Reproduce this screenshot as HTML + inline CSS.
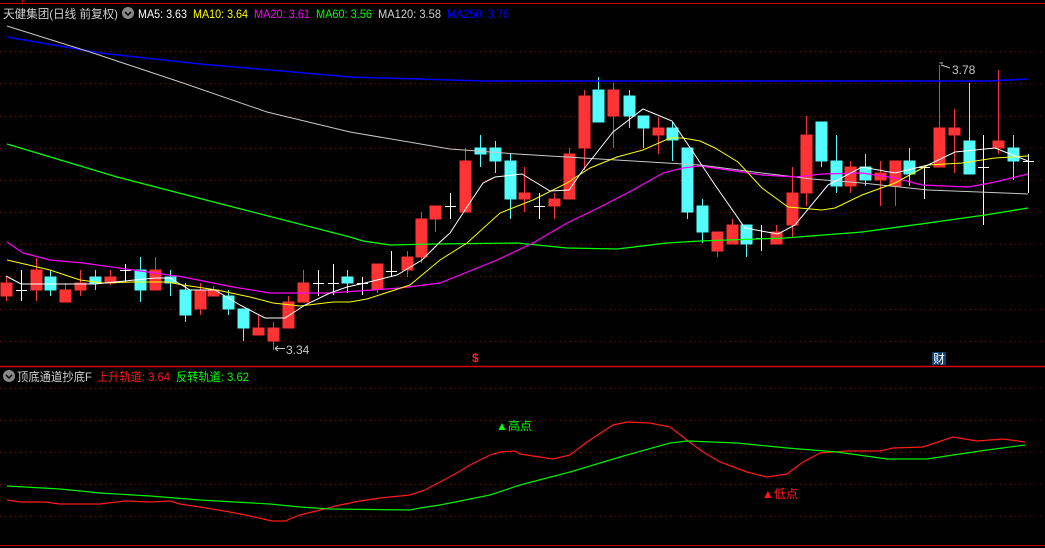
<!DOCTYPE html>
<html><head><meta charset="utf-8"><style>
html,body{margin:0;padding:0;background:#000;width:1045px;height:548px;overflow:hidden}
svg{display:block}
text{font-family:"Liberation Sans","Noto Sans CJK SC",sans-serif;font-size:12px}
</style></head><body>
<svg width="1045" height="548" viewBox="0 0 1045 548" xmlns="http://www.w3.org/2000/svg">
<rect width="1045" height="548" fill="#000"/>
<line x1="0" y1="3.5" x2="1045" y2="3.5" stroke="#c00" stroke-width="1"/>
<line x1="22.5" y1="0" x2="22.5" y2="3" stroke="#c00"/>
<g stroke="#8a0000" stroke-width="1" stroke-dasharray="1,4">
<line x1="0" y1="51.5" x2="1045" y2="51.5"/><line x1="0" y1="83.5" x2="1045" y2="83.5"/>
<line x1="0" y1="116.5" x2="1045" y2="116.5"/><line x1="0" y1="148.5" x2="1045" y2="148.5"/>
<line x1="0" y1="180.5" x2="1045" y2="180.5"/><line x1="0" y1="212.5" x2="1045" y2="212.5"/>
<line x1="0" y1="244.5" x2="1045" y2="244.5"/><line x1="0" y1="276.5" x2="1045" y2="276.5"/>
<line x1="0" y1="309.5" x2="1045" y2="309.5"/><line x1="0" y1="341.5" x2="1045" y2="341.5"/>
<line x1="0" y1="388.5" x2="1045" y2="388.5"/><line x1="0" y1="420.5" x2="1045" y2="420.5"/>
<line x1="0" y1="452.5" x2="1045" y2="452.5"/><line x1="0" y1="484.5" x2="1045" y2="484.5"/>
<line x1="0" y1="516.5" x2="1045" y2="516.5"/>
</g>
<line x1="0" y1="366.5" x2="1045" y2="366.5" stroke="#d00" stroke-width="1.5"/>
<line x1="0" y1="545.5" x2="1045" y2="545.5" stroke="#b00" stroke-width="1"/>

<g stroke-width="1">
<g stroke="#ff3333" fill="#ff3333">
<line x1="6.5" y1="277" x2="6.5" y2="301"/><rect x="1" y="283" width="11" height="13"/>
<line x1="36.5" y1="258" x2="36.5" y2="301"/><rect x="31" y="270" width="11" height="20"/>
<line x1="65.5" y1="283" x2="65.5" y2="302"/><rect x="60" y="290" width="11" height="12"/>
<line x1="80.5" y1="270" x2="80.5" y2="296"/><rect x="75" y="283" width="11" height="7"/>
<line x1="110.5" y1="270" x2="110.5" y2="285"/><rect x="105" y="277" width="11" height="6"/>
<line x1="155.5" y1="257" x2="155.5" y2="290"/><rect x="150" y="270" width="11" height="20"/>
<line x1="200.5" y1="283" x2="200.5" y2="315"/><rect x="195" y="290" width="11" height="19"/>
<line x1="213.5" y1="286" x2="213.5" y2="296"/><rect x="208" y="290" width="11" height="6"/>
<line x1="258.5" y1="315" x2="258.5" y2="335"/><rect x="253" y="328" width="11" height="7"/>
<line x1="273.5" y1="322" x2="273.5" y2="350"/><rect x="268" y="328" width="11" height="13"/>
<line x1="288.5" y1="296" x2="288.5" y2="328"/><rect x="283" y="302" width="11" height="26"/>
<line x1="303.5" y1="270" x2="303.5" y2="302"/><rect x="298" y="283" width="11" height="19"/>
<line x1="377.5" y1="264" x2="377.5" y2="293"/><rect x="372" y="264" width="11" height="25"/>
<line x1="407.5" y1="251" x2="407.5" y2="277"/><rect x="402" y="257" width="11" height="13"/>
<line x1="421.5" y1="212" x2="421.5" y2="263"/><rect x="416" y="219" width="11" height="38"/>
<line x1="435.5" y1="206" x2="435.5" y2="232"/><rect x="430" y="206" width="11" height="13"/>
<line x1="465.5" y1="148" x2="465.5" y2="212"/><rect x="460" y="161" width="11" height="51"/>
<line x1="524.5" y1="167" x2="524.5" y2="212"/><rect x="519" y="193" width="11" height="6"/>
<line x1="554.5" y1="193" x2="554.5" y2="219"/><rect x="549" y="199" width="11" height="7"/>
<line x1="569.5" y1="148" x2="569.5" y2="199"/><rect x="564" y="154" width="11" height="45"/>
<line x1="584.5" y1="90" x2="584.5" y2="170"/><rect x="579" y="96" width="11" height="52"/>
<line x1="613.5" y1="83" x2="613.5" y2="148"/><rect x="608" y="90" width="11" height="26"/>
<line x1="658.5" y1="117" x2="658.5" y2="154"/><rect x="653" y="128" width="11" height="7"/>
<line x1="717.5" y1="232" x2="717.5" y2="257"/><rect x="712" y="232" width="11" height="19"/>
<line x1="732.5" y1="219" x2="732.5" y2="244"/><rect x="727" y="225" width="11" height="19"/>
<line x1="776.5" y1="225" x2="776.5" y2="244"/><rect x="771" y="232" width="11" height="12"/>
<line x1="792.5" y1="167" x2="792.5" y2="238"/><rect x="787" y="193" width="11" height="32"/>
<line x1="806.5" y1="116" x2="806.5" y2="206"/><rect x="801" y="135" width="11" height="58"/>
<line x1="850.5" y1="161" x2="850.5" y2="193"/><rect x="845" y="167" width="11" height="19"/>
<line x1="880.5" y1="161" x2="880.5" y2="206"/><rect x="875" y="173" width="11" height="7"/>
<line x1="895.5" y1="161" x2="895.5" y2="206"/><rect x="890" y="161" width="11" height="25"/>
<line x1="939.5" y1="65" x2="939.5" y2="167"/><rect x="934" y="128" width="11" height="39"/>
<line x1="954.5" y1="109" x2="954.5" y2="173"/><rect x="949" y="128" width="11" height="7"/>
<line x1="998.5" y1="70" x2="998.5" y2="154"/><rect x="993" y="141" width="11" height="7"/>
</g>
<g stroke="#54fcfc" fill="#54fcfc">
<line x1="50.5" y1="270" x2="50.5" y2="296"/><rect x="45" y="277" width="11" height="13"/>
<line x1="95.5" y1="270" x2="95.5" y2="290"/><rect x="90" y="277" width="11" height="6"/>
<line x1="140.5" y1="257" x2="140.5" y2="302"/><rect x="135" y="270" width="11" height="20"/>
<line x1="170.5" y1="270" x2="170.5" y2="296"/><rect x="165" y="277" width="11" height="6"/>
<line x1="185.5" y1="283" x2="185.5" y2="322"/><rect x="180" y="290" width="11" height="25"/>
<line x1="228.5" y1="290" x2="228.5" y2="315"/><rect x="223" y="296" width="11" height="13"/>
<line x1="243.5" y1="309" x2="243.5" y2="341"/><rect x="238" y="309" width="11" height="19"/>
<line x1="347.5" y1="270" x2="347.5" y2="293"/><rect x="342" y="277" width="11" height="6"/>
<line x1="480.5" y1="135" x2="480.5" y2="167"/><rect x="475" y="148" width="11" height="6"/>
<line x1="495.5" y1="141" x2="495.5" y2="173"/><rect x="490" y="148" width="11" height="13"/>
<line x1="510.5" y1="154" x2="510.5" y2="219"/><rect x="505" y="161" width="11" height="38"/>
<line x1="598.5" y1="77" x2="598.5" y2="122"/><rect x="593" y="90" width="11" height="32"/>
<line x1="629.5" y1="90" x2="629.5" y2="128"/><rect x="624" y="96" width="11" height="20"/>
<line x1="643.5" y1="116" x2="643.5" y2="148"/><rect x="638" y="116" width="11" height="12"/>
<line x1="672.5" y1="122" x2="672.5" y2="161"/><rect x="667" y="128" width="11" height="12"/>
<line x1="687.5" y1="148" x2="687.5" y2="219"/><rect x="682" y="148" width="11" height="64"/>
<line x1="702.5" y1="199" x2="702.5" y2="243"/><rect x="697" y="206" width="11" height="26"/>
<line x1="746.5" y1="225" x2="746.5" y2="257"/><rect x="741" y="225" width="11" height="19"/>
<line x1="821.5" y1="122" x2="821.5" y2="167"/><rect x="816" y="122" width="11" height="39"/>
<line x1="836.5" y1="135" x2="836.5" y2="193"/><rect x="831" y="161" width="11" height="25"/>
<line x1="865.5" y1="154" x2="865.5" y2="186"/><rect x="860" y="167" width="11" height="13"/>
<line x1="909.5" y1="148" x2="909.5" y2="186"/><rect x="904" y="161" width="11" height="13"/>
<line x1="969.5" y1="83" x2="969.5" y2="174"/><rect x="964" y="141" width="11" height="33"/>
<line x1="1013.5" y1="135" x2="1013.5" y2="180"/><rect x="1008" y="148" width="11" height="13"/>
</g>
<g stroke="#fff">
<line x1="21.5" y1="270" x2="21.5" y2="301"/><line x1="16" y1="290.5" x2="27" y2="290.5"/>
<line x1="125.5" y1="264" x2="125.5" y2="282"/><line x1="120" y1="270.5" x2="131" y2="270.5"/>
<line x1="318.5" y1="270" x2="318.5" y2="296"/><line x1="313" y1="283.5" x2="324" y2="283.5"/>
<line x1="333.5" y1="264" x2="333.5" y2="295"/><line x1="328" y1="283.5" x2="339" y2="283.5"/>
<line x1="362.5" y1="277" x2="362.5" y2="295"/><line x1="357" y1="283.5" x2="368" y2="283.5"/>
<line x1="391.5" y1="251" x2="391.5" y2="277"/><line x1="386" y1="271.5" x2="397" y2="271.5"/>
<line x1="450.5" y1="193" x2="450.5" y2="219"/><line x1="445" y1="206.5" x2="456" y2="206.5"/>
<line x1="539.5" y1="193" x2="539.5" y2="219"/><line x1="534" y1="206.5" x2="545" y2="206.5"/>
<line x1="761.5" y1="225" x2="761.5" y2="251"/><line x1="756" y1="238.5" x2="767" y2="238.5"/>
<line x1="924.5" y1="167" x2="924.5" y2="199"/><line x1="919" y1="167.5" x2="930" y2="167.5"/>
<line x1="983.5" y1="135" x2="983.5" y2="225"/><line x1="978" y1="167.5" x2="989" y2="167.5"/>
<line x1="1028.5" y1="154" x2="1028.5" y2="193"/><line x1="1023" y1="161.5" x2="1034" y2="161.5"/>
</g>
</g>

<g fill="none" stroke-width="1">
<polyline stroke="#0000ff" stroke-width="1.5" points="7,37 100,53 200,64 350,77 483,81 700,81 988,81 1028,79"/>
<polyline stroke="#c8c8c8" points="7,26 90,52 183,83 267,112 350,132 450,149 517,154 583,158 633,161 700,165 762,173 812,179 862,183 928,190 1028,194"/>
<polyline stroke="#00ff00" stroke-width="1.3" points="7,144 117,177 233,207 350,237 363,241 390,245 433,244 517,243 567,248 617,249 667,243 700,241 785,238 862,232 928,223 985,215 1028,208"/>
<polyline stroke="#ff00ff" stroke-width="1.2" points="7,242 23,253 50,260 83,263 133,270 183,277 233,287 270,293 330,293 400,288 440,283 497,260 533,243 567,223 600,207 633,190 663,173 683,168 700,166 728,170 762,175 795,177 822,174 862,173 895,178 922,185 968,187 995,182 1028,174"/>
<polyline stroke="#ffff00" points="7,260 33,266 50,270 80,280 103,283 133,282 167,282 183,285 217,290 250,297 273,303 300,306 333,302 350,302 367,299 410,285 440,260 467,243 500,213 533,200 567,183 590,168 617,157 643,150 670,138 683,138 700,141 715,148 738,162 762,188 788,207 822,210 835,208 862,195 895,183 928,165 962,163 995,158 1028,156"/>
<polyline stroke="#ffffff" points="6,276 21,284 50,284 95,284 125,281 155,278 170,278 190,290 215,290 240,305 265,318 285,318 305,305 330,293 347,287 365,283 397,275 422,260 440,242 450,233 467,207 483,183 495,177 522,174 550,191 569,190 583,170 613,132 643,109 672,121 695,155 715,185 745,228 778,234 795,225 828,185 862,167 895,173 928,165 955,152 995,148 1028,161"/>
</g>

<polyline fill="none" stroke="#ff1a1a" stroke-width="1.2" points="7,500 20,502 45,502 60,504 100,504 125,501 150,502 170,501 180,504 200,507 230,512 250,516 272,521 285,521 300,515 320,510 340,505 360,501 380,498 410,495 425,490 440,482 455,474 470,465 490,455 500,452 515,451 520,454 553,459 570,455 587,442 613,425 627,422 650,423 670,427 687,440 703,452 720,462 747,472 767,477 787,474 803,462 820,453 847,451 880,451 893,448 923,447 953,437 977,441 1003,439 1025,442"/>
<polyline fill="none" stroke="#00ee00" stroke-width="1.2" points="7,486 60,489 100,493 150,496 200,500 270,504 300,507 330,509 410,510 420,508 440,505 470,499 490,495 520,485 570,472 620,457 670,443 687,441 737,443 787,448 837,452 887,459 927,459 953,455 987,450 1025,445"/>

<text x="3" y="18" fill="#d0d0d0" font-size="13" textLength="115" lengthAdjust="spacingAndGlyphs">天健集团(日线 前复权)</text>
<circle cx="128" cy="13" r="6" fill="#888"/>
<path d="M125,12 L128,15 L131,12" stroke="#000" stroke-width="1.5" fill="none"/>
<text x="138" y="18" fill="#fff" textLength="49" lengthAdjust="spacingAndGlyphs">MA5: 3.63</text>
<text x="193" y="18" fill="#ffff00" textLength="55" lengthAdjust="spacingAndGlyphs">MA10: 3.64</text>
<text x="254" y="18" fill="#ff00ff" textLength="56" lengthAdjust="spacingAndGlyphs">MA20: 3.61</text>
<text x="316" y="18" fill="#00ff00" textLength="56" lengthAdjust="spacingAndGlyphs">MA60: 3.56</text>
<text x="378" y="18" fill="#d0d0d0" textLength="63" lengthAdjust="spacingAndGlyphs">MA120: 3.58</text>
<text x="447" y="18" fill="#0000ff" textLength="62" lengthAdjust="spacingAndGlyphs">MA250: 3.76</text>

<text x="952" y="74" fill="#c8c8c8">3.78</text>
<path d="M939.5,63 L943,63 M941,65 L950,68" stroke="#c8c8c8" fill="none"/>
<text x="286" y="354" fill="#c8c8c8">3.34</text>
<path d="M275,348.5 L285,348.5 M275,348.5 L278,346 M275,348.5 L278,351" stroke="#c8c8c8" fill="none"/>

<text x="472" y="362" fill="#ff2020" font-weight="bold" font-size="12">$</text>
<rect x="932" y="352" width="14" height="13" fill="#0b3f72"/>
<text x="933" y="363" fill="#fff" font-size="11">财</text>

<circle cx="9" cy="376" r="6" fill="#888"/>
<path d="M6,375 L9,378 L12,375" stroke="#000" stroke-width="1.5" fill="none"/>
<text x="17" y="381" fill="#d0d0d0" font-size="13" textLength="75" lengthAdjust="spacingAndGlyphs">顶底通道抄底F</text>
<text x="97" y="381" fill="#ff1a1a" font-size="13" textLength="73" lengthAdjust="spacingAndGlyphs">上升轨道: 3.64</text>
<text x="176" y="381" fill="#00ff00" font-size="13" textLength="73" lengthAdjust="spacingAndGlyphs">反转轨道: 3.62</text>

<text x="496" y="430" fill="#00ff00" font-size="12">▲高点</text>
<text x="762" y="498" fill="#ff1a1a" font-size="12">▲低点</text>
</svg>
</body></html>
